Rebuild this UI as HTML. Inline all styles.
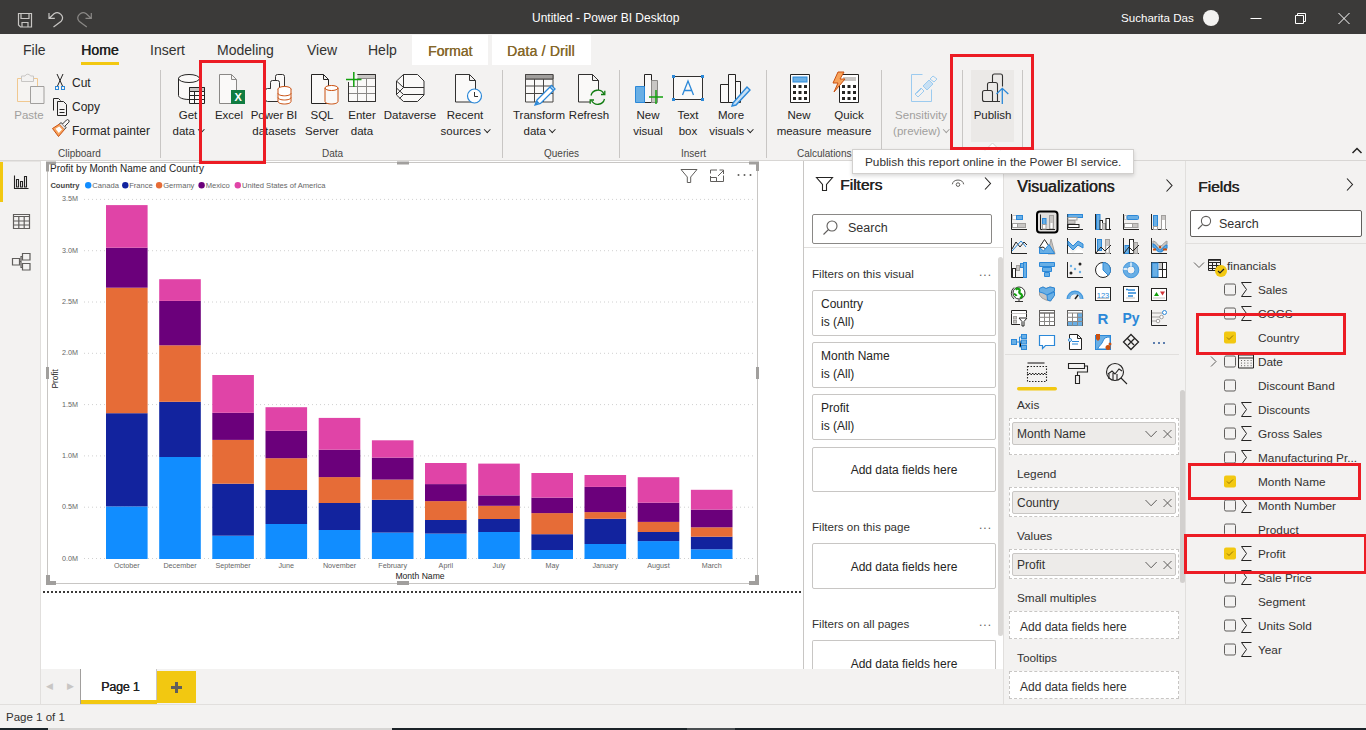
<!DOCTYPE html>
<html><head><meta charset="utf-8">
<style>
*{margin:0;padding:0;box-sizing:border-box}
html,body{width:1366px;height:730px;overflow:hidden;background:#f3f2f1;font-family:"Liberation Sans",sans-serif;color:#252423}
.a{position:absolute}
.t{position:absolute;white-space:nowrap;line-height:1}
svg{position:absolute;overflow:visible}
#titlebar{left:0;top:0;width:1366px;height:34px;background:#3b3a39}
.tab{position:absolute;top:43px;font-size:14px;color:#323130;line-height:14px}
.chev{display:inline-block;width:4.5px;height:4.5px;border-right:1px solid currentColor;border-bottom:1px solid currentColor;transform:rotate(45deg);margin:0 0 3.5px 4px}
.rl{position:absolute;font-size:11.5px;color:#252423;text-align:center;line-height:16px;white-space:nowrap}
.gl{position:absolute;top:148px;font-size:10px;color:#484644;white-space:nowrap;line-height:12px}
.vd{position:absolute;top:70px;width:1px;height:88px;background:#c8c6c4}
.fc{border:1px solid #c8c6c4;border-radius:2px;background:#fff}
.well{border:1px dashed #c8c6c4;background:#fff}
.pill{border:1px solid #c8c6c4;border-radius:2px;background:#edebe9}
.vl{font-size:11.8px;color:#323130;margin-top:1px}
.pt{font-size:12px;color:#323130;margin-top:1px}
.fl{font-size:11.8px;color:#323130;line-height:13px}
.red{position:absolute;border:3px solid #ec1c24}
</style></head><body>

<!-- TITLE BAR -->
<div class="a" id="titlebar"></div>
<div class="t" style="left:532px;top:12px;font-size:12px;color:#fff">Untitled - Power BI Desktop</div>
<div class="t" style="left:1121px;top:12px;font-size:11.6px;color:#fff">Sucharita Das</div>
<div class="a" style="left:1203px;top:10px;width:16px;height:16px;border-radius:50%;background:#f3f2f1"></div>
<svg style="left:0;top:0" width="1366" height="34">
 <g fill="none" stroke="#c8c6c4" stroke-width="1.2">
  <path d="M18.5 13.5h13v13.5h-11l-2-2z M21 13.5v5h8v-5 M22 27v-4.5h6v4.5"/>
  <path d="M49 12.9V18.3H54.8 M49.3 18.2L54 13.8A5.2 5.2 0 0 1 61.2 21.2L53.5 26.9"/>
  <path d="M91.3 12.9V18.3H85.5 M91 18.2L86.3 13.8A5.2 5.2 0 0 0 79.1 21.2L86.8 26.9" stroke="#8a8886"/>
 </g>
 <g fill="none" stroke="#fff" stroke-width="1">
  <path d="M1250.5 18.5h11"/>
  <path d="M1295.5 15.5h8v8h-8z M1297.5 15.5v-2h8v8h-2"/>
  <path d="M1338.5 13l11 11 M1349.5 13l-11 11"/>
 </g>
</svg>

<!-- RIBBON TABS -->
<div class="tab" style="left:23px">File</div>
<div class="tab" style="left:81px;color:#201f1e;text-shadow:0.4px 0 0 #201f1e;letter-spacing:0.1px">Home</div>
<div class="a" style="left:81px;top:62px;width:38px;height:3px;background:#f2c811"></div>
<div class="tab" style="left:150px">Insert</div>
<div class="tab" style="left:217px">Modeling</div>
<div class="tab" style="left:307px">View</div>
<div class="tab" style="left:368px">Help</div>
<div class="a" style="left:412px;top:35px;width:76px;height:30px;background:#fff"></div>
<div class="tab" style="left:428px;top:43.5px;color:#86682a;font-size:14px;text-shadow:0.35px 0 0 #86682a">Format</div>
<div class="a" style="left:492px;top:35px;width:99px;height:30px;background:#fff"></div>
<div class="tab" style="left:507px;top:43.5px;color:#86682a;font-size:14px;letter-spacing:0.2px;text-shadow:0.35px 0 0 #86682a">Data / Drill</div>

<!-- RIBBON CONTENT -->
<div class="a" style="left:0;top:160px;width:1366px;height:1px;background:#d8d6d4"></div><div class="a" style="left:0;top:161px;width:1366px;height:1px;background:#e6e4e2"></div>
<div class="vd" style="left:160px"></div>
<div class="vd" style="left:502px"></div>
<div class="vd" style="left:619px"></div>
<div class="vd" style="left:766px"></div>
<div class="vd" style="left:881px"></div>
<div class="vd" style="left:962px"></div>
<div class="vd" style="left:1022px"></div>
<div class="gl" style="left:58px">Clipboard</div>
<div class="gl" style="left:322px">Data</div>
<div class="gl" style="left:544px">Queries</div>
<div class="gl" style="left:681px">Insert</div>
<div class="gl" style="left:797px">Calculations</div>

<div class="rl" style="left:8px;top:107px;width:42px;color:#a19f9d">Paste</div>
<div class="t" style="left:72px;top:77px;font-size:12px">Cut</div>
<div class="t" style="left:72px;top:101px;font-size:12px">Copy</div>
<div class="t" style="left:72px;top:125px;font-size:12px">Format painter</div>

<div class="rl" style="left:168px;top:107px;width:40px">Get<br>data<span class="chev"></span></div>
<div class="rl" style="left:209px;top:107px;width:40px">Excel</div>
<div class="rl" style="left:249px;top:107px;width:50px">Power BI<br>datasets</div>
<div class="rl" style="left:302px;top:107px;width:40px">SQL<br>Server</div>
<div class="rl" style="left:342px;top:107px;width:40px">Enter<br>data</div>
<div class="rl" style="left:380px;top:107px;width:60px">Dataverse</div>
<div class="rl" style="left:437px;top:107px;width:56px">Recent<br>sources<span class="chev"></span></div>
<div class="rl" style="left:509px;top:107px;width:60px">Transform<br>data<span class="chev"></span></div>
<div class="rl" style="left:566px;top:107px;width:46px">Refresh</div>
<div class="rl" style="left:628px;top:107px;width:40px">New<br>visual</div>
<div class="rl" style="left:668px;top:107px;width:40px">Text<br>box</div>
<div class="rl" style="left:706px;top:107px;width:50px">More<br>visuals<span class="chev"></span></div>
<div class="rl" style="left:774px;top:107px;width:50px">New<br>measure</div>
<div class="rl" style="left:824px;top:107px;width:50px">Quick<br>measure</div>
<div class="rl" style="left:888px;top:107px;width:66px;color:#a19f9d">Sensitivity<br>(preview)<span class="chev"></span></div>
<div class="a" style="left:971px;top:70px;width:43px;height:72px;background:#ebe9e7"></div>
<div class="rl" style="left:967px;top:107px;width:51px">Publish</div>
<svg style="left:1350px;top:145px" width="14" height="10"><path d="M2.5 8 L7 3.5 L11.5 8" fill="none" stroke="#252423" stroke-width="1.5"/></svg>

<!-- ribbon icons -->
<svg style="left:0;top:66px" width="1366" height="40" id="ricons">
 <g fill="none" stroke-width="1">
  <!-- paste -->
  <path d="M17.5 12.5h20v23h-20z" stroke="#f0c890" fill="#f6f4f2"/>
  <path d="M21.5 15.5v-5.5h3.5a3 3 0 0 1 5.5 0h3v5.5z" stroke="#c8c6c4" fill="#f3f2f1"/>
  <path d="M30.5 20.5h13.5v17h-13.5z" stroke="#a19f9d" fill="#f3f2f1"/>
  <!-- cut -->
  <path d="M57 8 L62.5 20 M63 8 L57.5 20" stroke="#252423"/>
  <rect x="55.5" y="20.5" width="3" height="3" stroke="#2b88d8" fill="none"/><rect x="61.5" y="20.5" width="3" height="3" stroke="#2b88d8" fill="none"/>
  <!-- copy -->
  <path d="M53.5 44.5v-12h5l2 2" stroke="#252423"/>
  <path d="M57.5 35.5h6l3 3v11h-9z M59.5 43.5h5 M59.5 46.5h5" stroke="#252423"/>
  <!-- format painter -->
  <path d="M52.5 62.5 L59.5 58 L64.5 63.5 L58.5 70.5 Z" stroke="#ca5010" fill="#f7a35c" stroke-linejoin="round"/>
  <path d="M55.5 62.8 L59.3 60.5 L62 63.5 L58.8 67 Z" fill="#fff" stroke="none"/>
  <path d="M59.5 58 L61 56.5 L66 61.5 L64.5 63.5" stroke="#323130" fill="#e1dfdd"/>
  <path d="M62.5 58 L66.5 54 A1.6 1.6 0 0 1 68.8 56.2 L64.8 60.3" stroke="#323130" fill="#faf9f8"/>
  <!-- get data -->
  <path d="M178.5 12.5v17c0 2.2 4.7 4 10.5 4h0.5v-12h10v-9" fill="#faf9f8" stroke="none"/>
  <ellipse cx="189" cy="12.5" rx="10.5" ry="4" stroke="#252423" fill="#faf9f8"/>
  <path d="M178.5 12.5v17c0 2.2 4.7 4 10.5 4 M199.5 12.5v8.5" stroke="#252423" fill="none"/>
  <path d="M189.5 21.5h15v16h-15z M189.5 25.5h15 M189.5 29.5h15 M189.5 33.5h15 M194.5 25.5v12 M199.5 25.5v12" stroke="#252423" fill="#faf9f8"/>
  <path d="M189.5 21.5h15v4h-15z" fill="#c8c6c4" stroke="#252423"/>
  <!-- excel -->
  <path d="M219.5 8.5h12l5 5v24h-17z M231.5 8.5v5h5" stroke="#8a8886" fill="#faf9f8"/>
  <rect x="231" y="24" width="14" height="14" fill="#107c41" stroke="none"/>
  <text x="234.5" y="35" font-size="11" fill="#fff" stroke="none" font-family="Liberation Sans" font-weight="bold">X</text>
  <!-- power bi datasets -->
  <path d="M275.5 23v-12.5a2 2 0 0 1 2-2h5a2 2 0 0 1 2 2v13" stroke="#323130" fill="#faf9f8"/>
  <path d="M270.5 35.5v-19a2 2 0 0 1 2-2h5a2 2 0 0 1 2 2v7" stroke="#323130" fill="#faf9f8"/>
  <path d="M278.5 35.5h-11a2 2 0 0 1-2-2v-9a2 2 0 0 1 2-2h3" stroke="#323130" fill="#faf9f8"/>
  <ellipse cx="284.5" cy="23" rx="6.5" ry="2.5" stroke="#ca5010" fill="#fff"/>
  <path d="M278 23v12.5c0 1.4 2.9 2.5 6.5 2.5s6.5-1.1 6.5-2.5v-12.5 M278 27.3c0 1.4 2.9 2.5 6.5 2.5s6.5-1.1 6.5-2.5 M278 31.5c0 1.4 2.9 2.5 6.5 2.5s6.5-1.1 6.5-2.5" stroke="#ca5010" fill="#fff"/>
  <!-- sql server -->
  <path d="M311.5 8.5h12l5 5v24h-17z M323.5 8.5v5h5" stroke="#252423" fill="#faf9f8"/>
  <path d="M325 22v13.5c0 1.4 2.9 2.5 6.5 2.5s6.5-1.1 6.5-2.5v-13.5z" stroke="none" fill="#faf9f8"/>
  <ellipse cx="331.5" cy="22" rx="6.5" ry="2.5" stroke="#ca5010" fill="#fff"/>
  <path d="M325 22v13.5c0 1.4 2.9 2.5 6.5 2.5s6.5-1.1 6.5-2.5v-13.5" stroke="#ca5010" fill="none"/>
  <!-- enter data -->
  <path d="M348.5 16v19.5h27v-27h-18" stroke="#323130" fill="#faf9f8"/>
  <path d="M357.5 12.5h18v-4h-18z" fill="#c8c6c4" stroke="none"/>
  <path d="M357.5 12.5h18 M348.5 20.5h27 M348.5 27.5h27 M357.5 12.5v23 M366.5 12.5v23" stroke="#8a8886"/>
  <path d="M357.5 8.5h18v27h-27v-19.5" stroke="#323130" fill="none"/>
  <path d="M353.8 6v15 M346 13.6h15.5" stroke="#13a10e" stroke-width="1.5"/>
  <!-- dataverse -->
  <path d="M403.5 8.5H417.5L424 15V29L417.5 35.5H403.5L396.5 29V15Z" stroke="#323130" fill="#faf9f8"/>
  <path d="M396.5 15L403.5 21.5H424 M403.5 8.5V21.5 M396.5 22L403.5 28.5H424 M403.5 21.5L396.5 28.5 M403.5 28.5L399.5 32.5" stroke="#323130"/>
  <!-- recent -->
  <path d="M455.5 8.5h14l6 6v21.5h-20z M469.5 8.5v6h6" stroke="#323130" fill="#faf9f8"/>
  <circle cx="474.5" cy="30" r="7" stroke="#2b88d8" stroke-width="1.2" fill="#fff"/>
  <path d="M474.5 26v4.5h3.5" stroke="#323130"/>
  <!-- transform -->
  <path d="M525.5 8.5h27.5v27.5h-27.5z M525.5 13h27.5 M525.5 20h27.5 M525.5 27.5h27.5 M534.5 13v23 M543.5 13v23" stroke="#484644" fill="#faf9f8"/>
  <path d="M525.5 8.5h27.5v4.5h-27.5z" fill="#a19f9d" stroke="#484644"/>
  <path d="M537 34 L551.5 19.5 L555 23 L540.5 37.5 L535 39z" stroke="#2b88d8" fill="#fff" stroke-width="1.3"/>
  <path d="M535.5 38.5 L537 34.5 L539.5 37z" fill="#2b88d8" stroke="none"/>
  <path d="M550 21 L553.5 24.5" stroke="#2b88d8" stroke-width="1.5"/>
  <!-- refresh -->
  <path d="M578.5 8.5h14l6 6v21.5h-20z M592.5 8.5v6h6" stroke="#323130" fill="#faf9f8"/>
  <rect x="590" y="24" width="16" height="15" fill="#f3f2f1" stroke="none"/>
  <path d="M591 29.5 a7 7 0 0 1 13 -1.5 M604.5 33 a7 7 0 0 1 -13 1.5" stroke="#107c10" stroke-width="1.3"/>
  <path d="M601 28.5h3.8v-3.8 M594 34h-3.8v3.8" stroke="#107c10" stroke-width="1.3"/>
  <!-- new visual -->
  <path d="M644.5 8.5h7v28h-7z" stroke="#252423" fill="#faf9f8"/>
  <path d="M635.5 20.5h9v16h-9z" stroke="#2b88d8" fill="#69afe5"/>
  <path d="M651.5 14.5h6v22h-6z" stroke="#8a8886" fill="#c8c6c4"/>
  <path d="M656 24v14 M649 31h14" stroke="#13a10e" stroke-width="1.5"/>
  <!-- text box -->
  <path d="M673.5 10.5h29v23h-29z" stroke="#323130" fill="#faf9f8"/>
  <rect x="672" y="9" width="3" height="3" fill="#2b88d8" stroke="none"/><rect x="701" y="9" width="3" height="3" fill="#2b88d8" stroke="none"/>
  <rect x="672" y="32" width="3" height="3" fill="#2b88d8" stroke="none"/><rect x="701" y="32" width="3" height="3" fill="#2b88d8" stroke="none"/>
  <path d="M682.5 29L688 15l5.5 14 M684.3 24.5h7.4" stroke="#2b88d8" stroke-width="1.3"/>
  <!-- more visuals -->
  <path d="M728.5 8.5h7v28h-7z M720.5 18.5h8v18h-8z M735.5 15.5h5v21h-5z" stroke="#252423" fill="#faf9f8"/>
  <path d="M733 37 L747 21 L750 24 L736 39 L732 40z" stroke="#2b88d8" fill="#c7e0f4" stroke-width="1.4"/>
  <!-- new measure -->
  <path d="M790.5 8.5h19v28h-19z" stroke="#252423" fill="#fff"/>
  <rect x="793" y="11" width="14" height="5" fill="#69afe5" stroke="#2b88d8"/>
  <g fill="#252423" stroke="none">
   <rect x="793" y="19" width="3" height="3"/><rect x="798.5" y="19" width="3" height="3"/><rect x="804" y="19" width="3" height="3"/>
   <rect x="793" y="25" width="3" height="3"/><rect x="798.5" y="25" width="3" height="3"/><rect x="804" y="25" width="3" height="3"/>
   <rect x="793" y="31" width="3" height="3"/><rect x="798.5" y="31" width="3" height="3"/><rect x="804" y="31" width="3" height="3"/>
  </g>
  <!-- quick measure -->
  <path d="M839.5 8.5h19v28h-19z" stroke="#252423" fill="#fff"/>
  <rect x="843" y="11" width="13" height="4" fill="#c8c6c4" stroke="none"/>
  <g fill="#252423" stroke="none">
   <rect x="842" y="19" width="3" height="3"/><rect x="847.5" y="19" width="3" height="3"/><rect x="853" y="19" width="3" height="3"/>
   <rect x="842" y="25" width="3" height="3"/><rect x="847.5" y="25" width="3" height="3"/><rect x="853" y="25" width="3" height="3"/>
   <rect x="842" y="31" width="3" height="3"/><rect x="847.5" y="31" width="3" height="3"/><rect x="853" y="31" width="3" height="3"/>
  </g>
  <path d="M838 6 L833 17 L838 17 L834 26 L845 13 L840 13 L844 6z" fill="#f7a35c" stroke="#ca5010"/>
  <!-- sensitivity -->
  <path d="M922.5 8.5h-11v27h20v-12" stroke="#9ccbef"/>
  <path d="M915 28l6-6 3 3-6 6z M916.5 27.5l5-5" stroke="#9ccbef" stroke-width="1"/>
  <path d="M923 20l6-6 4 4-6 6z" stroke="#9ccbef" fill="#c7e0f4"/>
  <path d="M930 13l3-3 4 3-3 3z" stroke="#9ccbef"/>
  <!-- publish -->
  <path d="M992.5 35.5h-8a2 2 0 0 1-2-2v-7a2 2 0 0 1 2-2h6a2 2 0 0 1 2 2v9.5 M987.5 24.5v-6a2 2 0 0 1 2-2h6a2 2 0 0 1 2 2v17 M992.5 16.5v-6.5a2 2 0 0 1 2-2h6a2 2 0 0 1 2 2v10.5 M992 35.5h8" stroke="#323130" stroke-width="1.1"/>
  <path d="M1002.3 38v-16 M996.5 28 L1002.3 22.3 L1008.3 28" stroke="#2b88d8" stroke-width="1.3"/>
 </g>
</svg>

<!-- LEFT NAV -->
<div class="a" style="left:40px;top:161px;width:1px;height:544px;background:#e1dfdd"></div>
<div class="a" style="left:0;top:162px;width:3px;height:40px;background:#f2c811"></div>
<svg style="left:0;top:0" width="40" height="300">
 <g fill="none" stroke="#252423" stroke-width="1.1">
  <path d="M14.5 175.5v13h14"/>
  <path d="M16.5 179.5h2v7.5h-2z M20.5 181.5h2v5.5h-2z M24.5 176.5h2v10.5h-2z"/>
 </g>
 <g fill="none" stroke="#605e5c" stroke-width="1.2">
  <path d="M13.5 214.5h16v14h-16z M13.5 216.5h16 M13.5 221h16 M13.5 225h16 M18.8 216.5v12 M24.2 216.5v12"/>
  <path d="M12.5 258.5h7v6.5h-7z M22.5 253.5h7.5v6.5h-7.5z M22.5 263.5h7.5v6.5h-7.5z M19.5 261.5h1.5v6h1.5 M21 261.5v-5h1.5"/>
 </g>
</svg>

<!-- CANVAS -->
<div class="a" style="left:41px;top:161px;width:762px;height:508px;background:#fff"></div>


<!-- CHART VISUAL -->
<svg style="left:0;top:0" width="810" height="600">
<g><path d="M84 558.5H755" stroke="#d0d0d0" stroke-width="1" stroke-dasharray="1 3"/>
<path d="M84 507.2H755" stroke="#d0d0d0" stroke-width="1" stroke-dasharray="1 3"/>
<path d="M84 455.9H755" stroke="#d0d0d0" stroke-width="1" stroke-dasharray="1 3"/>
<path d="M84 404.6H755" stroke="#d0d0d0" stroke-width="1" stroke-dasharray="1 3"/>
<path d="M84 353.3H755" stroke="#d0d0d0" stroke-width="1" stroke-dasharray="1 3"/>
<path d="M84 302.0H755" stroke="#d0d0d0" stroke-width="1" stroke-dasharray="1 3"/>
<path d="M84 250.7H755" stroke="#d0d0d0" stroke-width="1" stroke-dasharray="1 3"/>
<path d="M84 199.4H755" stroke="#d0d0d0" stroke-width="1" stroke-dasharray="1 3"/></g>
<g font-family="Liberation Sans" font-size="7.2" fill="#666">
<text x="78" y="560.5" text-anchor="end">0.0M</text>
<text x="78" y="509.2" text-anchor="end">0.5M</text>
<text x="78" y="457.9" text-anchor="end">1.0M</text>
<text x="78" y="406.6" text-anchor="end">1.5M</text>
<text x="78" y="355.3" text-anchor="end">2.0M</text>
<text x="78" y="304.0" text-anchor="end">2.5M</text>
<text x="78" y="252.7" text-anchor="end">3.0M</text>
<text x="78" y="201.4" text-anchor="end">3.5M</text>
</g>
<g>
<rect x="106.0" y="506.4" width="41.6" height="52.6" fill="#118dff"/>
<rect x="106.0" y="413.2" width="41.6" height="93.2" fill="#12239e"/>
<rect x="106.0" y="287.7" width="41.6" height="125.5" fill="#e66c37"/>
<rect x="106.0" y="247.7" width="41.6" height="40.0" fill="#6b007b"/>
<rect x="106.0" y="205.1" width="41.6" height="42.6" fill="#e044a7"/>
<rect x="159.2" y="457.0" width="41.6" height="102.0" fill="#118dff"/>
<rect x="159.2" y="401.8" width="41.6" height="55.2" fill="#12239e"/>
<rect x="159.2" y="345.3" width="41.6" height="56.5" fill="#e66c37"/>
<rect x="159.2" y="300.9" width="41.6" height="44.4" fill="#6b007b"/>
<rect x="159.2" y="279.2" width="41.6" height="21.7" fill="#e044a7"/>
<rect x="212.3" y="535.7" width="41.6" height="23.3" fill="#118dff"/>
<rect x="212.3" y="483.7" width="41.6" height="52.0" fill="#12239e"/>
<rect x="212.3" y="439.9" width="41.6" height="43.8" fill="#e66c37"/>
<rect x="212.3" y="412.8" width="41.6" height="27.1" fill="#6b007b"/>
<rect x="212.3" y="375.0" width="41.6" height="37.8" fill="#e044a7"/>
<rect x="265.5" y="524.0" width="41.6" height="35.0" fill="#118dff"/>
<rect x="265.5" y="490.0" width="41.6" height="34.0" fill="#12239e"/>
<rect x="265.5" y="458.2" width="41.6" height="31.8" fill="#e66c37"/>
<rect x="265.5" y="430.8" width="41.6" height="27.4" fill="#6b007b"/>
<rect x="265.5" y="407.2" width="41.6" height="23.6" fill="#e044a7"/>
<rect x="318.7" y="530.0" width="41.6" height="29.0" fill="#118dff"/>
<rect x="318.7" y="503.0" width="41.6" height="27.0" fill="#12239e"/>
<rect x="318.7" y="477.1" width="41.6" height="25.9" fill="#e66c37"/>
<rect x="318.7" y="449.7" width="41.6" height="27.4" fill="#6b007b"/>
<rect x="318.7" y="417.9" width="41.6" height="31.8" fill="#e044a7"/>
<rect x="371.9" y="532.6" width="41.6" height="26.4" fill="#118dff"/>
<rect x="371.9" y="499.8" width="41.6" height="32.8" fill="#12239e"/>
<rect x="371.9" y="479.6" width="41.6" height="20.2" fill="#e66c37"/>
<rect x="371.9" y="457.6" width="41.6" height="22.0" fill="#6b007b"/>
<rect x="371.9" y="440.3" width="41.6" height="17.3" fill="#e044a7"/>
<rect x="425.0" y="533.6" width="41.6" height="25.4" fill="#118dff"/>
<rect x="425.0" y="520.0" width="41.6" height="13.6" fill="#12239e"/>
<rect x="425.0" y="501.1" width="41.6" height="18.9" fill="#e66c37"/>
<rect x="425.0" y="484.1" width="41.6" height="17.0" fill="#6b007b"/>
<rect x="425.0" y="463.0" width="41.6" height="21.1" fill="#e044a7"/>
<rect x="478.2" y="532.0" width="41.6" height="27.0" fill="#118dff"/>
<rect x="478.2" y="519.0" width="41.6" height="13.0" fill="#12239e"/>
<rect x="478.2" y="505.8" width="41.6" height="13.2" fill="#e66c37"/>
<rect x="478.2" y="495.4" width="41.6" height="10.4" fill="#6b007b"/>
<rect x="478.2" y="463.6" width="41.6" height="31.8" fill="#e044a7"/>
<rect x="531.4" y="550.0" width="41.6" height="9.0" fill="#118dff"/>
<rect x="531.4" y="534.2" width="41.6" height="15.8" fill="#12239e"/>
<rect x="531.4" y="513.1" width="41.6" height="21.1" fill="#e66c37"/>
<rect x="531.4" y="497.6" width="41.6" height="15.5" fill="#6b007b"/>
<rect x="531.4" y="473.0" width="41.6" height="24.6" fill="#e044a7"/>
<rect x="584.5" y="544.0" width="41.6" height="15.0" fill="#118dff"/>
<rect x="584.5" y="518.8" width="41.6" height="25.2" fill="#12239e"/>
<rect x="584.5" y="512.1" width="41.6" height="6.7" fill="#e66c37"/>
<rect x="584.5" y="486.9" width="41.6" height="25.2" fill="#6b007b"/>
<rect x="584.5" y="475.0" width="41.6" height="11.9" fill="#e044a7"/>
<rect x="637.7" y="541.1" width="41.6" height="17.9" fill="#118dff"/>
<rect x="637.7" y="532.0" width="41.6" height="9.1" fill="#12239e"/>
<rect x="637.7" y="521.9" width="41.6" height="10.1" fill="#e66c37"/>
<rect x="637.7" y="502.7" width="41.6" height="19.2" fill="#6b007b"/>
<rect x="637.7" y="477.2" width="41.6" height="25.5" fill="#e044a7"/>
<rect x="690.9" y="549.3" width="41.6" height="9.7" fill="#118dff"/>
<rect x="690.9" y="536.7" width="41.6" height="12.6" fill="#12239e"/>
<rect x="690.9" y="527.3" width="41.6" height="9.4" fill="#e66c37"/>
<rect x="690.9" y="509.6" width="41.6" height="17.7" fill="#6b007b"/>
<rect x="690.9" y="489.8" width="41.6" height="19.8" fill="#e044a7"/>
</g>
<g font-family="Liberation Sans" font-size="7.2" fill="#666">
<text x="126.8" y="568" text-anchor="middle">October</text>
<text x="180.0" y="568" text-anchor="middle">December</text>
<text x="233.1" y="568" text-anchor="middle">September</text>
<text x="286.3" y="568" text-anchor="middle">June</text>
<text x="339.5" y="568" text-anchor="middle">November</text>
<text x="392.7" y="568" text-anchor="middle">February</text>
<text x="445.8" y="568" text-anchor="middle">April</text>
<text x="499.0" y="568" text-anchor="middle">July</text>
<text x="552.2" y="568" text-anchor="middle">May</text>
<text x="605.3" y="568" text-anchor="middle">January</text>
<text x="658.5" y="568" text-anchor="middle">August</text>
<text x="711.7" y="568" text-anchor="middle">March</text>
</g>
<text x="50" y="172" font-family="Liberation Sans" font-size="10" fill="#252423">Profit by Month Name and Country</text>
<g font-family="Liberation Sans" font-size="7.6" fill="#666">
<text x="50.4" y="188" font-weight="bold" fill="#444">Country</text>
<circle cx="88.2" cy="185.3" r="3.2" fill="#118dff"/><text x="92.3" y="188">Canada</text>
<circle cx="125.3" cy="185.3" r="3.2" fill="#12239e"/><text x="129.2" y="188">France</text>
<circle cx="159.1" cy="185.3" r="3.2" fill="#e66c37"/><text x="163.2" y="188">Germany</text>
<circle cx="201.6" cy="185.3" r="3.2" fill="#6b007b"/><text x="205.7" y="188">Mexico</text>
<circle cx="237.8" cy="185.3" r="3.2" fill="#e044a7"/><text x="242" y="188">United States of America</text>
</g>
<text x="395.4" y="578.5" font-family="Liberation Sans" font-size="8.6" fill="#252423">Month Name</text>
<text transform="translate(57.6 388.6) rotate(-90)" font-family="Liberation Sans" font-size="8.4" fill="#252423">Profit</text>
<!-- border -->
<rect x="47.5" y="162.5" width="710" height="421" fill="none" stroke="#c8c6c4" stroke-width="1"/>
<g fill="#a19f9d">
<path d="M46 161.5h10v3h-7v7h-3z"/>
<path d="M759 161.5h-10v3h7v6.5h3z"/>
<path d="M46 585h10v-4h-6v-6h-4z"/>
<path d="M759 585h-10v-4h6v-6h4z"/>
<rect x="397" y="161.5" width="12" height="3"/>
<rect x="397" y="581" width="12" height="4"/>
<rect x="46" y="367" width="3" height="12"/>
<rect x="756" y="367" width="3" height="12"/>
</g>
<!-- header icons -->
<g fill="none" stroke="#605e5c" stroke-width="1">
<path d="M681 169.5h16l-6.3 7.5v5.5h-3.4v-5.5z"/>
<path d="M710.5 176v5.5h13v-6 M710.5 173.5v-3.5h6.5 M719.5 170h4v4 M716.5 181.5v-4h-6 M718 176l5.5-5.5"/>
</g>
<g fill="#605e5c"><circle cx="738.5" cy="175" r="1"/><circle cx="744.5" cy="175" r="1"/><circle cx="750.5" cy="175" r="1"/></g>
<path d="M43 592H801" stroke="#3b3a39" stroke-width="2" stroke-dasharray="2 2"/>
</svg>

<!-- PAGE TABS -->
<div class="a" style="left:41px;top:669px;width:963px;height:35px;background:#f3f2f1"></div>
<div class="t" style="left:46px;top:682px;font-size:9px;color:#c8c6c4">◀</div>
<div class="t" style="left:67px;top:682px;font-size:9px;color:#c8c6c4">▶</div>
<div class="a" style="left:80px;top:669px;width:77px;height:35px;background:#fff;border-left:1px solid #a19f9d;border-right:1px solid #c8c6c4"></div>
<div class="a" style="left:81px;top:700px;width:76px;height:4px;background:#f2c811"></div>
<div class="t" style="left:101px;top:681px;font-size:12.5px;color:#252423;text-shadow:0.4px 0 0 #252423;letter-spacing:-0.2px">Page 1</div>
<div class="a" style="left:157px;top:671px;width:39px;height:32px;background:#f2c811"></div>
<svg style="left:157px;top:671px" width="39" height="32"><path d="M19.5 11v11 M14 16.5h11" stroke="#605e5c" stroke-width="3"/></svg>


<!-- FILTERS PANE -->
<div class="a" style="left:803px;top:161px;width:1px;height:508px;background:#c8c6c4"></div>
<div class="a" style="left:804px;top:161px;width:200px;height:508px;background:#fff"></div>
<div class="a" style="left:1003px;top:161px;width:1px;height:543px;background:#e1dfdd"></div>
<svg style="left:804px;top:161px" width="200" height="90">
 <g fill="none" stroke="#252423" stroke-width="1.1">
  <path d="M12.5 16.5h16l-6 7v6l-4 0v-6z"/>
  <path d="M181 16.5l5.5 6l-5.5 6"/>
 </g>
 <g fill="none" stroke="#605e5c" stroke-width="1">
  <path d="M148.3 23.3a5.8 5.2 0 0 1 11.4 0"/><circle cx="154" cy="23.6" r="1.8"/>
 </g>
 <g fill="none" stroke="#605e5c" stroke-width="1.2"><circle cx="28" cy="65" r="5"/><path d="M24.5 68.5l-5 5"/></g>
</svg>
<div class="t" style="left:840px;top:177px;font-size:15.5px;color:#252423;text-shadow:0.5px 0 0 #252423">Filters</div>
<div class="a" style="left:812px;top:214px;width:180px;height:30px;border:1px solid #8a8886;border-radius:2px;background:#fff"></div>
<svg style="left:812px;top:214px" width="40" height="30"><g fill="none" stroke="#605e5c" stroke-width="1.1"><circle cx="20" cy="12" r="5"/><path d="M16.5 15.5l-5 5"/></g></svg>
<div class="t" style="left:848px;top:222px;font-size:12.5px;color:#323130">Search</div>
<div class="a" style="left:804px;top:247px;width:199px;height:1px;background:#e1dfdd"></div>
<div class="a" style="left:998px;top:257px;width:5px;height:379px;background:#dad8d6;border-radius:3px"></div>

<div class="t" style="left:812px;top:268px;font-size:11.6px;color:#323130">Filters on this visual</div>
<div class="t" style="left:979px;top:266px;font-size:12px;color:#605e5c;letter-spacing:1px">...</div>
<div class="a fc" style="left:812px;top:290px;width:184px;height:46px"></div>
<div class="t" style="left:821px;top:295px;font-size:12px;color:#252423;line-height:18px">Country<br>is (All)</div>
<div class="a fc" style="left:812px;top:342px;width:184px;height:46px"></div>
<div class="t" style="left:821px;top:347px;font-size:12px;color:#252423;line-height:18px">Month Name<br>is (All)</div>
<div class="a fc" style="left:812px;top:394px;width:184px;height:46px"></div>
<div class="t" style="left:821px;top:399px;font-size:12px;color:#252423;line-height:18px">Profit<br>is (All)</div>
<div class="a fc" style="left:812px;top:447px;width:184px;height:45px"></div>
<div class="t" style="left:812px;top:464px;width:184px;text-align:center;font-size:12px;color:#252423">Add data fields here</div>

<div class="t" style="left:812px;top:521px;font-size:11.6px;color:#323130">Filters on this page</div>
<div class="t" style="left:979px;top:519px;font-size:12px;color:#605e5c;letter-spacing:1px">...</div>
<div class="a fc" style="left:812px;top:543px;width:184px;height:46px"></div>
<div class="t" style="left:812px;top:561px;width:184px;text-align:center;font-size:12px;color:#252423">Add data fields here</div>

<div class="t" style="left:812px;top:618px;font-size:11.6px;color:#323130">Filters on all pages</div>
<div class="t" style="left:979px;top:616px;font-size:12px;color:#605e5c;letter-spacing:1px">...</div>
<div class="a fc" style="left:812px;top:640px;width:184px;height:29px;border-bottom:none;border-radius:2px 2px 0 0"></div>
<div class="t" style="left:812px;top:658px;width:184px;text-align:center;font-size:12px;color:#252423">Add data fields here</div>

<!-- VISUALIZATIONS PANE -->
<div class="a" style="left:1004px;top:161px;width:181px;height:543px;background:#f3f2f1"></div>
<div class="a" style="left:1185px;top:161px;width:1px;height:543px;background:#e1dfdd"></div>
<div class="t" style="left:1017px;top:179px;font-size:16px;color:#252423;text-shadow:0.5px 0 0 #252423">Visualizations</div>
<svg style="left:1160px;top:175px" width="20" height="20"><path d="M6.5 4.5l5.5 6l-5.5 6" fill="none" stroke="#252423" stroke-width="1.1"/></svg>
<svg style="left:0;top:0" width="1366" height="360"><g stroke-width="1">
<g transform="translate(1011 214)"><path d="M0.5 0V15.5H16" stroke="#252423" fill="none"/><rect x="1.5" y="1.5" width="4" height="4" fill="#fff" stroke="#c8c6c4"/><rect x="5.5" y="1.5" width="6" height="4" fill="#69afe5" stroke="#2b88d8"/><rect x="1.5" y="9.5" width="5" height="4" fill="#fff" stroke="#a19f9d"/><rect x="6.5" y="9.5" width="8" height="4" fill="#c8c6c4" stroke="#a19f9d"/></g>
<g transform="translate(1039 214)"><rect x="-2" y="-2.5" width="20.5" height="21" rx="3" fill="#e1dfdd" stroke="#000" stroke-width="2"/><path d="M1.5 0.5V15.5H16" stroke="#252423" fill="none"/><rect x="3.5" y="4.5" width="3.5" height="6" fill="#69afe5" stroke="#2b88d8"/><rect x="3.5" y="10.5" width="3.5" height="4.5" fill="#fff" stroke="#a19f9d"/><rect x="10.5" y="1.5" width="4" height="13" fill="#c8c6c4" stroke="#a19f9d"/><rect x="11.5" y="9" width="2" height="5.5" fill="#fff"/></g>
<g transform="translate(1067 214)"><path d="M0.5 0V15.5H16" stroke="#252423" fill="none"/><rect x="1" y="0.5" width="14.5" height="3" fill="#69afe5" stroke="#2b88d8"/><rect x="1" y="3.5" width="9" height="2.5" fill="#fff" stroke="#a19f9d"/><rect x="1" y="6.5" width="7" height="3" fill="#c8c6c4" stroke="#a19f9d"/><rect x="1" y="10.5" width="11" height="3" fill="#fff" stroke="#252423"/></g>
<g transform="translate(1095 214)"><path d="M0.5 0V15.5H16" stroke="#252423" fill="none"/><rect x="1.5" y="0.5" width="3.5" height="15" fill="#69afe5" stroke="#2b88d8"/><rect x="5" y="6.5" width="2.5" height="9" fill="#fff" stroke="#252423"/><rect x="7.5" y="9.5" width="3" height="6" fill="#c8c6c4" stroke="#a19f9d"/><rect x="11" y="4.5" width="3.5" height="11" fill="#fff" stroke="#252423"/></g>
<g transform="translate(1123 214)"><path d="M0.5 0V15.5H16" stroke="#252423" fill="none"/><rect x="1.5" y="1.5" width="2.5" height="4" fill="#fff" stroke="#c8c6c4"/><rect x="4" y="1.5" width="11.5" height="4" rx="1" fill="#69afe5" stroke="#2b88d8"/><rect x="1.5" y="9.5" width="8" height="4" fill="#fff" stroke="#a19f9d"/><rect x="9.5" y="9.5" width="5.5" height="4" fill="#c8c6c4" stroke="#a19f9d"/></g>
<g transform="translate(1151 214)"><path d="M0.5 0V15.5H16" stroke="#252423" fill="none"/><rect x="2.5" y="1.5" width="4" height="11" fill="#69afe5" stroke="#2b88d8"/><rect x="2.5" y="12.5" width="4" height="3" fill="#fff" stroke="#a19f9d"/><rect x="10.5" y="1.5" width="4" height="14" fill="#fff" stroke="#a19f9d"/><rect x="11" y="2" width="3" height="4" fill="#c8c6c4"/></g>
<g transform="translate(1011 238)"><path d="M0.5 0V15.5H16" stroke="#252423" fill="none"/><path d="M1 11L5 4l4 5 4-5 3 3" stroke="#252423" fill="none"/><path d="M1 13L10 3l5 6" stroke="#2b88d8" fill="none"/></g>
<g transform="translate(1039 238)"><path d="M12 1L16 16H9z" fill="#c8c6c4" stroke="#a19f9d"/><path d="M0 10L5.5 1.5L10.5 9L8 12L4 9z" fill="#fff" stroke="#252423"/><path d="M0.5 9.5L4.5 13L10 6.5L15.5 15.5H0.5z" fill="#69afe5" stroke="#2b88d8"/></g>
<g transform="translate(1067 238)"><path d="M0.5 0V15.5H16" stroke="#252423" fill="none"/><path d="M1 3L6 8l5-5 5 3v4l-5-3-5 5-5-5z" fill="#69afe5" stroke="#2b88d8"/><path d="M1 10l5 5 5-5 5 3v2.5H1z" fill="#fff" stroke="none"/></g>
<g transform="translate(1095 238)"><path d="M0.5 0V15.5H16" stroke="#252423" fill="none"/><rect x="2.5" y="1.5" width="4" height="11" fill="#69afe5" stroke="#2b88d8"/><rect x="10.5" y="1.5" width="4" height="14" fill="#c8c6c4" stroke="#a19f9d"/><rect x="11.5" y="8" width="2" height="6.5" fill="#fff"/><path d="M1 15l5-6 4 4 6-6" stroke="#252423" fill="none"/></g>
<g transform="translate(1123 238)"><path d="M0.5 0V15.5H16" stroke="#252423" fill="none"/><rect x="2" y="7.5" width="4" height="8" fill="#69afe5" stroke="#2b88d8"/><rect x="6.5" y="1.5" width="4" height="14" fill="#fff" stroke="#252423"/><rect x="11" y="4.5" width="3.5" height="11" fill="#c8c6c4" stroke="#a19f9d"/><path d="M1 15l5-6 4 4 6-6" stroke="#252423" fill="none"/></g>
<g transform="translate(1151 238)"><path d="M0.5 0V15.5H16" stroke="#252423" fill="none"/><path d="M2 3c4 0 4 5 7 5s4-4 7-5v3c-3 1-4 5-7 5S5 6 2 6z" fill="#c8c6c4" stroke="#a19f9d"/><path d="M2 6c4 1 4 6 7 6s4-5 7-5v3c-3 0-4 4-7 4S5 10 2 9z" fill="#69afe5" stroke="#2b88d8" stroke-width="1.2"/><rect x="2" y="10.5" width="3" height="2" fill="#ca5010"/><rect x="12" y="10.5" width="4" height="2" fill="#ca5010"/><rect x="8" y="8" width="2" height="2" fill="#ca5010"/></g>
<g transform="translate(1011 262)"><path d="M0.5 0V15.5H16" stroke="#252423" fill="none"/><rect x="1.5" y="6.5" width="3" height="9" fill="#fff" stroke="#252423"/><rect x="5.5" y="3.5" width="3" height="5" fill="#c8c6c4" stroke="#a19f9d"/><rect x="9.5" y="1.5" width="3" height="4" fill="#69afe5" stroke="#2b88d8"/><rect x="12.5" y="0.5" width="3" height="15" fill="#69afe5" stroke="#2b88d8"/></g>
<g transform="translate(1039 262)"><path d="M0.5 0.5h15v4h-15z" fill="#69afe5" stroke="#2b88d8"/><path d="M3.5 5.5h9v4h-9z" fill="#69afe5" stroke="#2b88d8"/><path d="M5.5 10.5h5v4h-5z" fill="#69afe5" stroke="#2b88d8"/></g>
<g transform="translate(1067 262)"><path d="M0.5 0V15.5H16" stroke="#252423" fill="none"/><circle cx="13" cy="2" r="1.5" fill="#252423"/><circle cx="4" cy="4" r="1.2" fill="#69afe5"/><circle cx="8" cy="7" r="1.2" fill="#69afe5"/><circle cx="4" cy="11" r="1.5" fill="#252423"/><circle cx="13" cy="10" r="1.2" fill="#69afe5"/></g>
<g transform="translate(1095 262)"><circle cx="8" cy="8" r="7.5" fill="#fff" stroke="#252423"/><path d="M8 8V0.5A7.5 7.5 0 0 1 13.3 13.3z" fill="#69afe5" stroke="#2b88d8"/></g>
<g transform="translate(1123 262)"><circle cx="8" cy="8" r="6" fill="none" stroke="#69afe5" stroke-width="3.5"/><circle cx="8" cy="8" r="7.8" fill="none" stroke="#2b88d8" stroke-width="0.8"/><circle cx="8" cy="8" r="4" fill="none" stroke="#2b88d8" stroke-width="0.8"/><path d="M8 0.5v4 M0.5 7h4" stroke="#fff" stroke-width="1.3"/></g>
<g transform="translate(1151 262)"><rect x="0.5" y="0.5" width="15" height="15" fill="#fff" stroke="#252423"/><rect x="1" y="1" width="6" height="14" fill="#69afe5" stroke="#2b88d8"/><path d="M7.5 7.5h8 M11.5 7.5v8 M11.5 0.5v7" stroke="#252423"/><rect x="8" y="1" width="3" height="6" fill="#c8c6c4"/></g>
<g transform="translate(1011 286)"><circle cx="8" cy="7" r="6" fill="#fff" stroke="#323130"/><path d="M4.5 3.5c1.5-1 3-1 4 0s-1 2.5 0 3.5 2 1 2.5 2.5-1 2-2 2.5 M3 8c1 0 2 1 2.5 2" stroke="#13a10e" stroke-width="2.2" fill="none"/><path d="M3 1.5a7.5 7.5 0 0 0 0 11.5 M8 13.5v2 M4 15.5h8" stroke="#323130" fill="none"/></g>
<g transform="translate(1039 286)"><path d="M0.5 2.5L4 1l3 1.5L11 1l4.5 1v7l-2 3-2 3L7 14 3 12 0.5 9z" fill="#c8c6c4" stroke="#a19f9d"/><path d="M0.5 2.5L4 1l3 1.5L11 1l4.5 1v3L8 9 4 7 0.5 6z" fill="#69afe5" stroke="#2b88d8"/><path d="M8 9l7.5-3v3.5l-4 5.5-3-1z" fill="#69afe5" stroke="#2b88d8"/></g>
<g transform="translate(1067 286)"><path d="M1 13a7 7 0 0 1 14 0" fill="none" stroke="#69afe5" stroke-width="3"/><path d="M0.2 13a7.8 7.8 0 0 1 15.6 0 M2.8 13a5.2 5.2 0 0 1 10.4 0" fill="none" stroke="#2b88d8" stroke-width="0.7"/><path d="M8 13l3-4" stroke="#252423" stroke-width="1.6"/></g>
<g transform="translate(1095 286)"><rect x="0.5" y="1.5" width="15" height="13" fill="#fff" stroke="#252423"/><text x="8" y="11.5" font-size="7.5" text-anchor="middle" fill="#2b88d8" font-family="Liberation Sans">123</text><path d="M2 12.5h12" stroke="#c8c6c4"/></g>
<g transform="translate(1123 286)"><rect x="0.5" y="0.5" width="15" height="15" fill="#fff" stroke="#252423"/><path d="M3 3.5h2 M5 4h7 M5 7h8 M5 10h5" stroke="#2b88d8" stroke-width="1.5"/><path d="M3 12h9" stroke="#c8c6c4"/></g>
<g transform="translate(1151 286)"><rect x="0.5" y="2.5" width="15" height="12" fill="#fff" stroke="#252423"/><path d="M3 10l2.5-4 2.5 4z" fill="#13a10e"/><path d="M9 5.5h5l-2.5 4z" fill="#d13438"/><path d="M2 12h12" stroke="#c8c6c4"/></g>
<g transform="translate(1011 310)"><path d="M15.5 7V0.5H0.5v14H9" fill="#fff" stroke="#252423"/><path d="M0.5 3.5h15" stroke="#c8c6c4"/><rect x="2.5" y="6.5" width="3" height="2.5" fill="#c8c6c4" stroke="#a19f9d"/><rect x="2.5" y="10.5" width="3" height="2.5" fill="#c8c6c4" stroke="#a19f9d"/><path d="M8 8h8l-3 3.5v4.5h-2v-4.5z" fill="#fff" stroke="#252423"/></g>
<g transform="translate(1039 310)"><rect x="0.5" y="0.5" width="15" height="15" fill="#fff" stroke="#605e5c"/><path d="M0.5 3h15 M0.5 7.3h15 M0.5 11.5h15 M5.5 3v12.5 M10.5 3v12.5" stroke="#8a8886"/><path d="M0.5 3h15" stroke="#605e5c"/></g>
<g transform="translate(1067 310)"><rect x="0.5" y="0.5" width="15" height="15" fill="#fff" stroke="#605e5c"/><rect x="1" y="11.5" width="14" height="4" fill="#69afe5"/><rect x="10.5" y="3" width="4.5" height="12.5" fill="#69afe5"/><path d="M0.5 3h15 M0.5 7.3h15 M0.5 11.5h15 M5.5 3v12.5 M10.5 3v12.5" stroke="#8a8886"/></g>
<g transform="translate(1095 310)"><text x="8" y="14" font-size="15" font-weight="bold" text-anchor="middle" fill="#2b88d8" font-family="Liberation Sans">R</text></g>
<g transform="translate(1123 310)"><text x="8" y="13" font-size="14" font-weight="bold" text-anchor="middle" fill="#2b88d8" font-family="Liberation Sans">Py</text></g>
<g transform="translate(1151 310)"><path d="M0.5 0V15.5H16" stroke="#252423" fill="none"/><path d="M1 3h12 M1 7h9 M1 11h6" stroke="#a19f9d"/><circle cx="13.5" cy="2.5" r="2" fill="#fff" stroke="#2b88d8"/><circle cx="10.5" cy="7" r="1.8" fill="#fff" stroke="#a19f9d"/><circle cx="7" cy="11" r="1.8" fill="#fff" stroke="#a19f9d"/></g>
<g transform="translate(1011 334)"><rect x="0.5" y="5.5" width="5" height="5" fill="#69afe5" stroke="#2b88d8"/><path d="M5.5 8h3 M8.5 3v10h2 M8.5 3h2 M8.5 8h2" stroke="#2b88d8"/><rect x="10.5" y="0.5" width="5" height="4" fill="#69afe5" stroke="#2b88d8"/><rect x="10.5" y="6" width="5" height="4" fill="#69afe5" stroke="#2b88d8"/><rect x="10.5" y="11.5" width="5" height="4" fill="#69afe5" stroke="#2b88d8"/></g>
<g transform="translate(1039 334)"><path d="M0.5 1.5h15v10h-9l-3 3v-3h-3z" fill="#fff" stroke="#2b88d8" stroke-width="1.2"/></g>
<g transform="translate(1067 334)"><path d="M2.5 0.5h8l4 4v11h-12z M10.5 0.5v4h4" fill="#fff" stroke="#252423"/><circle cx="3" cy="6" r="1.5" fill="#fff" stroke="#2b88d8"/><path d="M5 7.5h7 M5 10h6" stroke="#2b88d8"/></g>
<g transform="translate(1095 334)"><rect x="0.5" y="1.5" width="15" height="14" fill="#69afe5" stroke="#2b88d8"/><path d="M3 14c2-3 4-4 5-7s3-4 7-4v12H3z" fill="#fff" stroke="#2b88d8"/><path d="M1 0h4v5l-2 2-2-2z" fill="#ca5010"/><circle cx="13" cy="13.5" r="2.5" fill="#ca5010"/><circle cx="15" cy="10" r="1.5" fill="#ca5010"/></g>
<g transform="translate(1123 334)"><path d="M8 0.5L15.5 8 8 15.5 0.5 8z M4.5 4.5L11 11 M11.5 4.5L5 11" fill="none" stroke="#252423" stroke-width="1.3"/></g>
<g transform="translate(1151 334)"><circle cx="3" cy="9" r="1" fill="#2b5797"/><circle cx="8" cy="9" r="1" fill="#2b5797"/><circle cx="13" cy="9" r="1" fill="#2b5797"/></g>
</g></svg>
<div class="a" style="left:1005px;top:354px;width:174px;height:1px;background:#e1dfdd"></div>
<svg style="left:1005px;top:355px" width="180" height="40">
 <g fill="none" stroke="#252423" stroke-width="1.1">
  <path d="M22.5 8h17" />
  <path d="M22.5 11.5h19v7h-19z M22.5 19.5h19v7h-19z" stroke-dasharray="1.5 1.5"/>
  <path d="M63.5 8.5h16v5h-16z M79.5 11h3v6h-10v3 M70.5 20.5h4v8h-4z"/>
  <circle cx="110" cy="17" r="8.5"/><path d="M116 23l6 6 M103 19l4-3 3 3 4-5 3 2 M104 19v5 M108 18v7 M112 19v6"/>
 </g>
 <rect x="12" y="32" width="40" height="3.5" rx="1.7" fill="#f2c811"/>
</svg>
<div class="a" style="left:1180px;top:390px;width:5px;height:193px;background:#d2d0ce;border-radius:3px"></div>

<div class="t vl" style="left:1017px;top:399px">Axis</div>
<div class="a well" style="left:1009px;top:418px;width:170px;height:37px"></div>
<div class="a pill" style="left:1012px;top:422px;width:164px;height:23px"></div>
<div class="t pt" style="left:1017px;top:427px">Month Name</div>
<div class="t vl" style="left:1017px;top:468px">Legend</div>
<div class="a well" style="left:1009px;top:487px;width:170px;height:30px"></div>
<div class="a pill" style="left:1012px;top:491px;width:164px;height:23px"></div>
<div class="t pt" style="left:1017px;top:496px">Country</div>
<div class="t vl" style="left:1017px;top:530px">Values</div>
<div class="a well" style="left:1009px;top:549px;width:170px;height:30px"></div>
<div class="a pill" style="left:1012px;top:553px;width:164px;height:23px"></div>
<div class="t pt" style="left:1017px;top:558px">Profit</div>
<svg style="left:1140px;top:422px" width="40" height="160">
 <g fill="none" stroke="#605e5c" stroke-width="1">
  <path d="M5.5 9l5.6 5.8 5.6-5.8 M23.5 8l8 8 M31.5 8l-8 8"/>
  <path d="M5.5 78l5.6 5.8 5.6-5.8 M23.5 77l8 8 M31.5 77l-8 8"/>
  <path d="M5.5 140l5.6 5.8 5.6-5.8 M23.5 139l8 8 M31.5 139l-8 8"/>
 </g>
</svg>
<div class="t vl" style="left:1017px;top:592px">Small multiples</div>
<div class="a well" style="left:1009px;top:611px;width:170px;height:28px"></div>
<div class="t pt" style="left:1020px;top:620px">Add data fields here</div>
<div class="t vl" style="left:1017px;top:652px">Tooltips</div>
<div class="a well" style="left:1009px;top:671px;width:170px;height:28px"></div>
<div class="t pt" style="left:1020px;top:680px">Add data fields here</div>

<!-- FIELDS PANE -->
<div class="a" style="left:1186px;top:161px;width:180px;height:543px;background:#f3f2f1"></div>
<div class="t" style="left:1198px;top:179px;font-size:15.5px;color:#252423;text-shadow:0.5px 0 0 #252423">Fields</div>
<svg style="left:1340px;top:175px" width="20" height="20"><path d="M7 3.5l5.5 6l-5.5 6" fill="none" stroke="#252423" stroke-width="1.1"/></svg>
<div class="a" style="left:1190px;top:210px;width:172px;height:27px;border:1px solid #605e5c;border-radius:2px;background:#fff"></div>
<svg style="left:1190px;top:210px" width="40" height="27"><g fill="none" stroke="#605e5c" stroke-width="1.1"><circle cx="16" cy="11" r="4.6"/><path d="M12.7 14.3l-4.7 4.7"/></g></svg>
<div class="t" style="left:1219px;top:218px;font-size:12.5px;color:#323130">Search</div>
<div class="a" style="left:1186px;top:243px;width:180px;height:1px;background:#e1dfdd"></div>
<svg style="left:1186px;top:250px" width="180" height="420"><g fill="none" stroke-width="1">
<path d="M8 12.5l5 5 5-5" stroke="#605e5c"/>
<g stroke="#252423"><path d="M22.5 9.5h12v11h-12z M22.5 12.5h12 M22.5 15.5h12 M22.5 18.5h12 M26.5 12.5v8 M30.5 12.5v8"/></g>
<path d="M22.5 10h12" stroke="#252423" stroke-width="1.6"/>
<circle cx="35" cy="21" r="6" fill="#f2c811" stroke="none"/><path d="M32 21l2 2 4-4" stroke="#252423" stroke-width="1.2"/>
<rect x="38.5" y="34.0" width="11" height="11" rx="1.5" stroke="#605e5c" fill="none"/>
<path d="M65.5 32.5h-10l5 7-5 7h10" stroke="#252423"/>
<rect x="38.5" y="58.0" width="11" height="11" rx="1.5" stroke="#605e5c" fill="none"/>
<path d="M65.5 56.5h-10l5 7-5 7h10" stroke="#252423"/>
<rect x="38" y="81.5" width="12" height="12" rx="2" fill="#f2c811" stroke="none"/>
<path d="M41 87.5l2 2 4-4" stroke="#8a6d00" stroke-width="0.9"/>
<rect x="38.5" y="106.0" width="11" height="11" rx="1.5" stroke="#605e5c" fill="none"/>
<path d="M25 106.5l5 5-5 5" stroke="#605e5c"/>
<path d="M52.5 105.0h15v13h-15z M52.5 108.0h15" stroke="#252423"/>
<rect x="55.0" y="110.0" width="1" height="1" fill="#605e5c" stroke="none"/>
<rect x="58.2" y="110.0" width="1" height="1" fill="#605e5c" stroke="none"/>
<rect x="61.4" y="110.0" width="1" height="1" fill="#605e5c" stroke="none"/>
<rect x="64.6" y="110.0" width="1" height="1" fill="#605e5c" stroke="none"/>
<rect x="55.0" y="112.6" width="1" height="1" fill="#605e5c" stroke="none"/>
<rect x="58.2" y="112.6" width="1" height="1" fill="#605e5c" stroke="none"/>
<rect x="61.4" y="112.6" width="1" height="1" fill="#605e5c" stroke="none"/>
<rect x="64.6" y="112.6" width="1" height="1" fill="#605e5c" stroke="none"/>
<rect x="55.0" y="115.2" width="1" height="1" fill="#605e5c" stroke="none"/>
<rect x="58.2" y="115.2" width="1" height="1" fill="#605e5c" stroke="none"/>
<rect x="61.4" y="115.2" width="1" height="1" fill="#605e5c" stroke="none"/>
<rect x="64.6" y="115.2" width="1" height="1" fill="#605e5c" stroke="none"/>
<rect x="38.5" y="130.0" width="11" height="11" rx="1.5" stroke="#605e5c" fill="none"/>
<rect x="38.5" y="154.0" width="11" height="11" rx="1.5" stroke="#605e5c" fill="none"/>
<path d="M65.5 152.5h-10l5 7-5 7h10" stroke="#252423"/>
<rect x="38.5" y="178.0" width="11" height="11" rx="1.5" stroke="#605e5c" fill="none"/>
<path d="M65.5 176.5h-10l5 7-5 7h10" stroke="#252423"/>
<rect x="38.5" y="202.0" width="11" height="11" rx="1.5" stroke="#605e5c" fill="none"/>
<path d="M65.5 200.5h-10l5 7-5 7h10" stroke="#252423"/>
<rect x="38" y="225.5" width="12" height="12" rx="2" fill="#f2c811" stroke="none"/>
<path d="M41 231.5l2 2 4-4" stroke="#8a6d00" stroke-width="0.9"/>
<rect x="38.5" y="250.0" width="11" height="11" rx="1.5" stroke="#605e5c" fill="none"/>
<path d="M65.5 248.5h-10l5 7-5 7h10" stroke="#252423"/>
<rect x="38.5" y="274.0" width="11" height="11" rx="1.5" stroke="#605e5c" fill="none"/>
<rect x="38" y="297.5" width="12" height="12" rx="2" fill="#f2c811" stroke="none"/>
<path d="M41 303.5l2 2 4-4" stroke="#8a6d00" stroke-width="0.9"/>
<path d="M65.5 296.5h-10l5 7-5 7h10" stroke="#252423"/>
<rect x="38.5" y="322.0" width="11" height="11" rx="1.5" stroke="#605e5c" fill="none"/>
<path d="M65.5 320.5h-10l5 7-5 7h10" stroke="#252423"/>
<rect x="38.5" y="346.0" width="11" height="11" rx="1.5" stroke="#605e5c" fill="none"/>
<rect x="38.5" y="370.0" width="11" height="11" rx="1.5" stroke="#605e5c" fill="none"/>
<path d="M65.5 368.5h-10l5 7-5 7h10" stroke="#252423"/>
<rect x="38.5" y="394.0" width="11" height="11" rx="1.5" stroke="#605e5c" fill="none"/>
<path d="M65.5 392.5h-10l5 7-5 7h10" stroke="#252423"/>
</g></svg>
<div class="t fl" style="left:1227px;top:260px">financials</div>
<div class="t fl" style="left:1258px;top:283.5px">Sales</div>
<div class="t fl" style="left:1258px;top:307.5px">COGS</div>
<div class="t fl" style="left:1258px;top:331.5px">Country</div>
<div class="t fl" style="left:1258px;top:355.5px">Date</div>
<div class="t fl" style="left:1258px;top:379.5px">Discount Band</div>
<div class="t fl" style="left:1258px;top:403.5px">Discounts</div>
<div class="t fl" style="left:1258px;top:427.5px">Gross Sales</div>
<div class="t fl" style="left:1258px;top:451.5px">Manufacturing Pr...</div>
<div class="t fl" style="left:1258px;top:475.5px">Month Name</div>
<div class="t fl" style="left:1258px;top:499.5px">Month Number</div>
<div class="t fl" style="left:1258px;top:523.5px">Product</div>
<div class="t fl" style="left:1258px;top:547.5px">Profit</div>
<div class="t fl" style="left:1258px;top:571.5px">Sale Price</div>
<div class="t fl" style="left:1258px;top:595.5px">Segment</div>
<div class="t fl" style="left:1258px;top:619.5px">Units Sold</div>
<div class="t fl" style="left:1258px;top:643.5px">Year</div>

<!-- STATUS BAR -->
<div class="a" style="left:0;top:704px;width:1366px;height:1px;background:#e1dfdd"></div>
<div class="t" style="left:6px;top:712px;font-size:11.5px;color:#323130">Page 1 of 1</div>
<div class="a" style="left:0;top:728px;width:1366px;height:2px;background:#1b2328"></div><div class="a" style="left:48px;top:728px;width:344px;height:2px;background:#d6d5d3"></div><div class="a" style="left:687px;top:728px;width:48px;height:2px;background:#4a4f52"></div>


<!-- OVERLAYS -->
<div class="a" style="left:852px;top:149px;width:282px;height:25px;background:#fff;border:1px solid #d2d0ce;box-shadow:0 2px 4px rgba(0,0,0,.15)"></div>
<svg style="left:985px;top:142px" width="16" height="9"><path d="M0 8.5L7.5 1 15 8.5" fill="#fff" stroke="#d2d0ce"/></svg>
<div class="a" style="left:986px;top:149px;width:14px;height:2px;background:#fff"></div>
<div class="t" style="left:865px;top:157px;font-size:11.8px;color:#323130">Publish this report online in the Power BI service.</div>
<div class="red" style="left:199px;top:60px;width:67px;height:104px"></div>
<div class="red" style="left:950px;top:54px;width:84px;height:96px"></div>
<div class="red" style="left:1196px;top:313px;width:150px;height:42px"></div>
<div class="red" style="left:1188px;top:463px;width:173px;height:37px"></div>
<div class="red" style="left:1184px;top:534px;width:183px;height:40px"></div>
</body></html>
